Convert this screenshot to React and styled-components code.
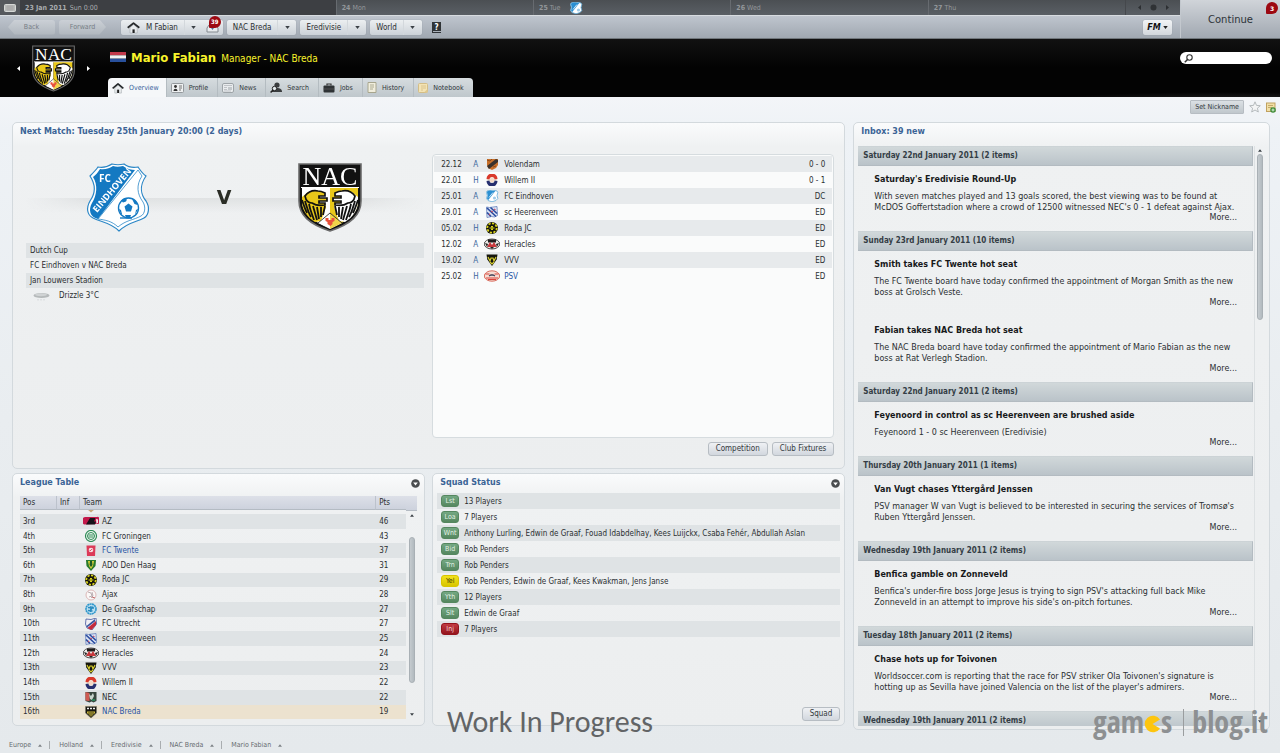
import { useLayoutEffect, useRef } from 'react';
import styled, { createGlobalStyle, css } from 'styled-components';

const narrow = `'DejaVu Sans Condensed', 'DejaVu Sans', Verdana, sans-serif`;
const wide = `'DejaVu Sans', Verdana, sans-serif`;

const GlobalStyle = createGlobalStyle`
* { box-sizing: border-box; }
body {
  margin: 0;
  background: #e6eaed;
  color: #2b2f31;
  font-family: ${narrow};
  font-size: 8px;
}
button, input { font-family: inherit; font-size: inherit; color: inherit; }
button { border: none; padding: 0; background: none; cursor: pointer; white-space: nowrap; }
a { color: inherit; text-decoration: none; }
h1, h2, h3, p, ul { margin: 0; padding: 0; }
ul { list-style: none; }
svg { display: block; flex: none; }
table { border-collapse: collapse; width: 100%; }
td, th { padding: 0; text-align: left; font-weight: 400; }
`;

const Page = styled.div`
position: relative;
display: flex;
flex-direction: column;
height: 100vh;
min-height: 640px;
overflow: hidden;
background: linear-gradient(#f3f5f8 97px, #eef2f6 130px, #e9edf0 420px, #e5e9ec);
`;

/* ---------- top of the window ---------- */

const Top = styled.header`
display: flex;
flex: none;
height: 39px;
border-bottom: 1px solid #70767b;
`;
const TopLeft = styled.div`
flex: 1;
display: flex;
flex-direction: column;
`;
const Timeline = styled.div`
display: grid;
grid-template-columns: 20px 8fr 5fr 5fr 5fr 5fr 55px;
height: 16px;
background: linear-gradient(#4b4f53, #5a5f65);
border-bottom: 1px solid #d8dce0;
color: #93979b;
font-size: 7px;
`;
const Day = styled.div`
display: flex;
align-items: center;
gap: 3px;
padding-left: 5px;
border-left: 1px solid #676b70;
white-space: nowrap;
${(p) => p.$today && css`
  background: #3d3f43;
  color: #a9acaf;
  border-left: none;
`}
svg { margin-left: 5px; }
`;
const DayEnd = styled.div`
display: flex;
align-items: center;
justify-content: center;
gap: 9px;
border-left: 1px solid #45484c;
`;
const CalendarCell = styled.div`
display: flex;
align-items: center;
justify-content: center;
background: #56595d;
`;
const Toolbar = styled.nav`
flex: 1;
display: flex;
align-items: center;
gap: 4px;
padding: 0 8px;
background: linear-gradient(#bfc5ce, #a0a8b1);
`;
const NavArrow = styled.button`
width: 47px;
height: 15px;
color: #767d85;
font-size: 7px;
background: linear-gradient(#cbd0d6, #b0b7be);
border-radius: 3px;
clip-path: ${(p) => p.$forward
    ? 'polygon(0 0, 86% 0, 100% 50%, 86% 100%, 0 100%)'
    : 'polygon(14% 0, 100% 0, 100% 100%, 14% 100%, 0 50%)'};
`;
const Menu = styled.div`
display: flex;
height: 15px;
border-radius: 2px;
background: linear-gradient(#eceff1, #ccd2d8);
box-shadow: 0 0 1px #7f868e;
margin-left: ${(p) => (p.$first ? '11px' : '0')};
`;
const MenuName = styled.button`
display: flex;
align-items: center;
gap: 6px;
padding: 0 6px;
`;
const MenuMore = styled.button`
display: flex;
align-items: center;
justify-content: center;
width: 19px;
border-left: 1px solid #d3d8dc;
`;
const InboxButton = styled.button`
position: relative;
width: 20px;
padding-left: 3px;
`;
const Badge = styled.span`
position: absolute;
top: ${(p) => p.$top || '-3px'};
right: 2px;
display: flex;
align-items: center;
justify-content: center;
width: 12px;
height: 12px;
border-radius: 6px 6px 6px 1px;
background: #9c0811;
color: #fff;
font-size: 6px;
font-weight: 700;
`;
const Spacer = styled.div`
flex: 1;
`;
const HelpButton = styled.button`
margin-left: 5px;
`;
const FmButton = styled.button`
display: flex;
align-items: center;
justify-content: center;
gap: 2px;
width: 29px;
height: 15px;
border-radius: 2px;
background: linear-gradient(#f2f4f6, #d3d8dd);
box-shadow: 0 0 1px #7f868e;
color: #111;
font: italic 700 8px ${wide};
`;
const Continue = styled.button`
position: relative;
width: 100px;
border-left: 1px solid #c3c8ce;
background: linear-gradient(#d0d4d9, #a1a8b1);
color: #2d3338;
font-family: ${wide};
font-size: 10px;
`;

/* ---------- banner ---------- */

const Banner = styled.div`
flex: none;
display: flex;
height: 58px;
padding: 0 8px 0 17px;
background:
  radial-gradient(ellipse at 96% 110%, #2b2b2b 0, transparent 12%),
  linear-gradient(#111, #030303 50%);
color: #fff;
`;
const ClubSwitch = styled.div`
display: flex;
align-items: center;
gap: 12px;
margin-right: 18px;
`;
const BannerMain = styled.div`
flex: 1;
display: flex;
flex-direction: column;
justify-content: space-between;
`;
const Title = styled.h1`
display: flex;
align-items: baseline;
gap: 5px;
padding: 11px 0 0 2px;
color: #f8f32b;
font-size: 13px;
line-height: 16px;
small {
  font-size: 10px;
  font-weight: 400;
}
`;
const Tabs = styled.div`
display: flex;
align-self: flex-start;
height: 19px;
border-radius: 4px 4px 0 0;
overflow: hidden;
`;
const Tab = styled.button`
display: flex;
align-items: center;
gap: 5px;
padding: 0 9px 0 4px;
font-size: 7px;
color: #30363a;
background: linear-gradient(#d6dcdf, #bfc7cc);
border-right: 1px solid #b4bcc1;
${(p) => p.$active && css`
  padding-right: 7px;
  background: #f5f7f9;
  color: #35629b;
`}
&:last-child { border-right: none; }
`;
const Search = styled.label`
display: flex;
align-items: center;
gap: 3px;
width: 92px;
height: 12px;
margin-top: 13px;
padding: 0 4px;
border-radius: 6px;
background: #fff;
input {
  min-width: 0;
  flex: 1;
  border: none;
  outline: none;
  padding: 0;
  background: none;
  color: #222;
}
`;

const SubBar = styled.div`
flex: none;
display: flex;
align-items: center;
justify-content: flex-end;
gap: 5px;
height: 25px;
padding: 0 4px 5px 0;
`;
const Button = styled.button`
height: 14px;
padding: 0 7px;
border: 1px solid #b7bdc3;
border-radius: 3px;
background: linear-gradient(#eff1f4, #d2d7de);
color: #343a40;
font-size: ${(p) => (p.$small ? '7px' : '8px')};
line-height: 12px;
${(p) => p.$small && css`
  padding: 0 4px;
  border-radius: 1px;
  background: linear-gradient(#dbe0e4, #c0c7cc);
`}
`;

/* ---------- panels ---------- */

const Content = styled.main`
flex: 1;
min-height: 0;
display: grid;
grid-template-columns: minmax(0, 2fr) minmax(0, 1fr);
gap: 8px;
padding: 0 10px 0 12px;
`;
const LeftSide = styled.div`
display: grid;
grid-template-columns: minmax(0, 1fr) minmax(0, 1fr);
grid-template-rows: minmax(0, 11fr) minmax(0, 8fr);
gap: 4px 7px;
padding-bottom: 4px;
min-height: 0;
`;
const Panel = styled.section`
display: flex;
flex-direction: column;
min-height: 0;
border: 1px solid #d3d9dd;
border-radius: 5px;
background: linear-gradient(#fafbfc, #eff1f2 24px, #eceeef);
grid-column: ${(p) => (p.$full ? '1 / -1' : 'auto')};
`;
const PanelHead = styled.div`
flex: none;
display: flex;
align-items: center;
justify-content: space-between;
height: 18px;
padding: 0 4px 0 7px;
h2 {
  color: #3b6496;
  font: 700 8px/18px ${wide};
}
`;
const PanelFoot = styled.div`
flex: none;
display: flex;
justify-content: flex-end;
gap: 4px;
padding-top: 4px;
`;

/* ---------- next match ---------- */

const MatchBody = styled.div`
flex: 1;
min-height: 0;
display: grid;
grid-template-columns: minmax(0, 1fr) minmax(0, 1fr);
gap: 4px;
padding: 13px 10px 12px 13px;
`;
const MatchSide = styled.div`
padding-right: 4px;
`;
const Versus = styled.div`
display: flex;
align-items: center;
justify-content: space-between;
height: 86px;
padding: 0 62px 0 60px;
background: linear-gradient(#dfe1e2, transparent) center 62% / 100% 15px no-repeat;
mask-image: linear-gradient(90deg, transparent, #000 15%, #000 85%, transparent);
strong {
  color: #2b2d26;
  font: 700 19px ${wide};
}
`;
const MatchFacts = styled.ul`
margin-top: 3px;
li {
  display: flex;
  align-items: center;
  gap: 9px;
  height: 15px;
  padding-left: 4px;
}
li:nth-child(odd) { background: #dfe3e5; }
li:last-child { padding-left: 7px; }
`;
const FixtureSide = styled.div`
display: flex;
flex-direction: column;
`;
const FixtureBox = styled.div`
flex: 1;
padding: 1px;
border: 1px solid #d6dcdf;
border-radius: 4px;
background: #fafbfb;
`;
const Fixtures = styled.table`
tr { height: 16px; }
tr:nth-child(odd) { background: #e7eaec; }
td:nth-child(1) { width: 37px; padding-left: 7px; }
td:nth-child(2) { width: 13px; padding-left: 2px; color: #3c689c; }
td:nth-child(3) { width: 20px; }
td:last-child { text-align: right; padding-right: 7px; }
`;
const TeamName = styled.a.attrs({ href: '#team' })`
color: ${(p) => (p.$mark ? '#2753a4' : 'inherit')};
`;

/* ---------- league table ---------- */

const LeagueBody = styled.div`
flex: 1;
min-height: 0;
display: flex;
margin: 4px 7px 6px;
`;
const LeagueScroll = styled.div`
flex: 1;
overflow-y: auto;
scrollbar-width: none;
`;
const League = styled.table`
border-collapse: separate;
border-spacing: 0;
height: 234px;
thead th {
  position: sticky;
  top: 0;
  height: 14px;
  padding-left: 3px;
  background: linear-gradient(#dde0e8, #cdd2dd);
  border-bottom: 1px solid #b4bbc3;
  border-right: 1px solid #bcc2cc;
}
thead th:last-child { border-right: none; }
th:nth-child(1) { width: 37px; }
th:nth-child(2) { width: 23px; }
th:nth-child(4) { width: 30px; }
td { padding-left: 3px; }
tbody tr:nth-child(even) { background: #dfe3e5; }
tbody tr:last-child { background: #ece2cf; }
`;
const TeamCell = styled.div`
display: flex;
align-items: center;
gap: 3px;
height: 12px;
`;
const Track = styled.div`
flex: none;
display: flex;
flex-direction: column;
align-items: center;
width: 11px;
padding-bottom: 3px;
&::before {
  content: '';
  width: 100%;
  height: 14px;
  margin-bottom: 3px;
  border-bottom: 1px solid #b4bbc3;
  background: linear-gradient(#dde0e8, #cdd2dd);
}
${(p) => p.$plain && css`
  padding-top: 3px;
  border-left: 1px solid #dde1e3;
  &::before { display: none; }
`}
`;
const Rail = styled.div`
flex: 1;
display: flex;
flex-direction: column;
width: 6px;
padding-top: ${(p) => (p.$offset ? '20px' : '2px')};
&::before {
  content: '';
  height: ${(p) => p.$thumb};
  border: 1px solid #a9b0b5;
  border-radius: 3px;
  background: linear-gradient(90deg, #c5cbcf, #b2babf);
}
`;

/* ---------- squad status ---------- */

const SquadList = styled.ul`
flex: 1;
margin: 1px 4px 0;
li {
  display: flex;
  align-items: center;
  gap: 5px;
  height: 16px;
  padding-left: 4px;
  white-space: nowrap;
}
li:nth-child(odd) { background: #dfe3e5; }
`;
const tagColors = {
  green: ['#74a883', '#55875f', '#e2f1e5'],
  yellow: ['#f2e21d', '#d8c500', '#3d3900'],
  red: ['#c23a41', '#93141d', '#f7d9da'],
};
const Tag = styled.span`
width: 18px;
height: 12px;
border-radius: 3px;
border: 1px solid ${(p) => tagColors[p.$tone][1]};
background: linear-gradient(${(p) => tagColors[p.$tone][0]}, ${(p) => tagColors[p.$tone][1]});
color: ${(p) => tagColors[p.$tone][2]};
font-size: 7px;
line-height: 10px;
text-align: center;
`;
const SquadFoot = styled(PanelFoot)`
padding: 0 4px 4px;
`;

/* ---------- inbox ---------- */

const InboxBody = styled.div`
flex: 1;
min-height: 0;
display: flex;
gap: 1px;
padding: 5px 4px 3px;
`;
const InboxScroll = styled.div`
flex: 1;
overflow-y: auto;
scrollbar-width: none;
`;
const DateStrip = styled.h2`
height: 20px;
padding-left: 5px;
border: 1px solid #b3bbc1;
border-top-color: #ccd3d6;
border-left: none;
background: linear-gradient(#d1d8da, #bac3c9);
color: #343d45;
font: 700 8px/18px ${narrow};
`;
const News = styled.article`
padding: 8px 12px 8px 16px;
font: 8px/11px ${wide};
& + & { margin-top: 1px; }
h3 {
  margin-bottom: 6px;
  color: #17191a;
  font-size: 8px;
  line-height: 11px;
}
`;
const More = styled.a.attrs({ href: '#more' })`
display: block;
padding-right: 4px;
line-height: 10px;
text-align: right;
`;

/* ---------- footer and overlays ---------- */

const Crumbs = styled.footer`
flex: none;
display: flex;
align-items: center;
height: 23px;
padding: 7px 0 0 9px;
color: #676c70;
font-size: 7px;
button {
  display: flex;
  align-items: center;
  gap: 7px;
}
button + button {
  margin-left: 7px;
  padding-left: 9px;
  border-left: 1px solid #a9adb0;
}
`;
const Progress = styled.div`
position: absolute;
left: 447px;
bottom: 14px;
color: #626466;
font: 30px/34px Carlito, Lato, sans-serif;
pointer-events: none;
`;
const BlogMark = styled.div`
position: absolute;
right: 12px;
bottom: 13px;
display: flex;
align-items: center;
color: #8d9092;
font: 700 30px/36px 'Liberation Sans Narrow', 'Open Sans Condensed', 'DejaVu Sans Condensed', sans-serif;
pointer-events: none;
svg { margin-top: 4px; }
i {
  width: 1px;
  height: 27px;
  margin: 0 8px 0 11px;
  background: #9a9d9f;
}
`;

/* ---------- drawings ---------- */

const Caret = ({ up, color = '#3b4146', size = 5 }) => (
  <svg width={size} height="3" viewBox="0 0 6 4">
    <path d={up ? 'M0 4 3 0 6 4z' : 'M0 0 3 4 6 0z'} fill={color} />
  </svg>
);

const SideArrow = ({ left, color = '#fff' }) => (
  <svg width="3" height="5" viewBox="0 0 3 5">
    <path d={left ? 'M3 0 0 2.5 3 5z' : 'M0 0 3 2.5 0 5z'} fill={color} />
  </svg>
);

const Dropdown = () => (
  <svg width="9" height="9" viewBox="0 0 9 9">
    <circle cx="4.5" cy="4.5" r="4.3" fill="#4a4d4f" />
    <path d="M2.2 3.4h4.6L4.5 6.6z" fill="#fff" />
  </svg>
);

const House = ({ size = 13 }) => (
  <svg width={size} height={size} viewBox="0 0 13 12">
    <path d="M3 6v5.5h2.6V8h2v3.5h2.6V6L6.6 3z" fill="#e9ecee" stroke="#a3a9ad" strokeWidth=".6" />
    <path d="M5.6 8h2v3.5h-2z" fill="#222" />
    <path d="M.7 6.3 6.5 1.6l5.8 4.7" fill="none" stroke="#26292b" strokeWidth="1.8" strokeLinejoin="round" />
  </svg>
);

const NacCrest = ({ width = 64, height = 69 }) => (
  <svg width={width} height={height} viewBox="0 0 64 69">
    <path d="M1 1h62v37c0 14-10 23-31 30C11 61 1 52 1 38z" fill="#111" stroke="#6c6c6c" strokeWidth="1.6" />
    <path d="M4 25h28v40C13 58 4 50 4 38z" fill="#fff" />
    <path d="M32 25h28v13c0 12-9 20-28 27z" fill="#e9c81a" />
    {/* left eagle, yellow on white */}
    <path d="M4 34l6-5 9 5-4 6 12 1 1 3-5 14-6 1C9 54 4 47 4 38z" fill="#e9c81a" />
    <path d="M7 33c3-4 8-6 13-5 3 0 5 1 7 2v3h-6v2h8v3h-8v2h6v2c-6 1-10 0-13-2-3 0-6-2-7-7z" fill="#e9c81a" stroke="#111" strokeWidth="1.700" />
    {/* right eagle, white on yellow */}
    <path d="M60 34l-6-5-9 5 4 6-12 1-1 3 5 14 6 1c8-5 13-12 13-21z" fill="#fff" />
    <path d="M57 33c-3-4-8-6-13-5-3 0-5 1-7 2v3h6v2h-8v3h8v2h-6v2c6 1 10 0 13-2 3 0 6-2 7-7z" fill="#fff" stroke="#111" strokeWidth="1.700" />
    <g fill="none" stroke="#111" strokeWidth="1.800">
      <path d="M4 37c2 6 3 9 5 13M7 38c2 6 3 11 6 16M11 41c1 6 3 10 5 16M15 43l4 14M19 44l2 12M23 44v10M27 43l-2 9" />
      <path d="M60 37c-2 6-3 9-5 13M57 38c-2 6-3 11-6 16M53 41c-1 6-3 10-5 16M49 43l-4 14M45 44l-2 12M41 44v10M37 43l2 9" />
    </g>
    <path d="M32 50 44 60 32 66 20 60z" fill="#fff" />
    <path d="M32 50 44 60 32 66z" fill="#f0d44a" />
    <path d="M32 50 44 60M32 50 20 60" stroke="#111" strokeWidth=".8" />
    <path d="M27.500 55h3v2h3v-2h3v3l-2 1v2l-2 2-3-2v-2l-2-1z" fill="#e8513c" />
    <path d="M3 24.500h58" stroke="#fff" strokeWidth="1.200" />
    <text x="32" y="21.500" textAnchor="middle" fill="#fff" fontFamily="'Liberation Serif', serif" fontSize="26">NAC</text>
  </svg>
);

const EindhovenCrest = () => (
  <svg width="64" height="70" viewBox="0 0 64 70">
    <path d="M12 5c6 1 11-1 14-3 4 1 8 1 12 0 4 3 9 4 14 3 2 3 5 7 8 9-7 10-5 19 0 25 4 6 3 14-2 17-7 4-16 4-25 13C24 60 14 60 7 56 1 53 0 46 4 39c5-7 6-16 0-25 3-3 6-6 8-9z" fill="#fff" stroke="#2a86c6" strokeWidth="1.200" />
    <path d="M14 7c5 1 10-1 13-3 3 1 6 1 10 0 4 3 9 4 12 4L12 57C4 55 2 48 6 41c5-8 6-18 1-26 3-2 5-5 7-8z" fill="#1479c2" />
    <path d="M52 8 12 57c7 1 14 2 20 8 8-7 16-7 23-11 4-2 5-9 2-14-6-8-7-17-1-26z" fill="#fff" stroke="#2a86c6" strokeWidth=".8" />
    <text x="19" y="20" textAnchor="middle" fill="#fff" fontFamily="'Open Sans', sans-serif" fontWeight="700" fontSize="10">FC</text>
    <text transform="translate(11 51) rotate(-50)" fill="#fff" fontFamily="'Open Sans', sans-serif" fontWeight="700" fontSize="9">EINDHOVEN</text>
    <circle cx="42.500" cy="46" r="10" fill="#fff" stroke="#1479c2" strokeWidth="1.400" />
    <path d="M42.500 41.500l4 3-1.500 5h-5l-1.500-5zM35 38.500l3-2 3 1-1 2-3 1zM46 37l4 2 1.500 4-3-1zM33 47l2 1 1 4-1 .5zM52 47l-2 1-1 5zM39 53l6 0-1 3h-4z" fill="#1479c2" />
    <path d="M34 56h12" stroke="#1479c2" strokeWidth="1.400" />
  </svg>
);

/* small club badges, all on a 16x12 canvas */
const badgeArt = {
  volendam: <><path d="M3 1h11v6l-2 3-4 2-4-2-1-3z" fill="#c8702a" /><path d="M3 8 12 1l2 1v2L5 11z" fill="#3a322d" /><path d="M3 2l3 1 2-2M9 9l3-1" stroke="#8a4b1c" fill="none" /></>,
  willem: <><circle cx="8" cy="6" r="5.500" fill="#f4efe2" /><path d="M2.500 5a5.500 5.500 0 0 1 11 0l-3 .5a2.500 2.500 0 0 0-5 0z" fill="#d9392b" /><path d="M2.500 7a5.500 5.500 0 0 0 11 0l-3-.5a2.500 2.500 0 0 1-5 0z" fill="#27306f" /><circle cx="8" cy="6" r="2.200" fill="#f5d9c6" /></>,
  eindhoven: <><path d="M3 1l3-.7 2 .4 2-.4 3 .7.800 1.500-.8 3 .8 3L12 10.500l-4 1.300-4-1.300L2.500 8.500l.8-3-.8-3z" fill="#fff" stroke="#62acd9" strokeWidth=".8" /><path d="M3.300 1.300l3-.7 2 .4 3.200-.3L4.300 10 3 8.500l.8-3-.8-3z" fill="#2b8fd2" /><path d="M5 7.500l4-5" stroke="#cfe8f8" /><circle cx="10.500" cy="8" r="1.600" fill="#9fcbe8" /></>,
  heerenveen: <><path d="M2.500 1l3 .5L13 .5l.5 9-3 1.500-3-.5-4.500 1z" fill="#dfe6f5" stroke="#6580bd" strokeWidth=".8" /><path d="M3 2l9 8.500M6.500 1.500l6.500 6M3 6.500l4 4" stroke="#2a4da0" strokeWidth="1.700" /><path d="M7 5l2 1M10 3l1.500 1M5 8l1 1" stroke="#c0506a" strokeWidth="1.200" /></>,
  roda: <><circle cx="8" cy="6" r="6" fill="#15150b" /><circle cx="8" cy="6" r="4.700" fill="none" stroke="#d9d31c" strokeWidth="1.800" strokeDasharray="2.200 1.400" /><path d="M5.500 6h5M7 4.600h2M7 7.400h2" stroke="#d9d31c" strokeWidth="1.200" /></>,
  heracles: <><ellipse cx="8" cy="6" rx="7.800" ry="5" fill="#eceae7" stroke="#4d4b4b" /><path d="M4 1.500h8v3H4z" fill="#1f1d1d" /><path d="M3 9l3-5 2 3 2-3 3 5z" fill="#c7373b" /><path d="M1 5l3 1-1 3zM15 5l-3 1 1 3zM6 9h4l-2 2z" fill="#222" /></>,
  vvv: <><path d="M2.500.5h11l-.8 5L8 12 3.300 5.500z" fill="#16160e" /><path d="M4 3l2 4 1-3h2l1 3 2-4M6 8l2 2 2-2" fill="none" stroke="#d7cf2e" strokeWidth="1.200" /></>,
  psv: <><ellipse cx="8" cy="6" rx="7.700" ry="5.200" fill="#f6dcd2" stroke="#d86d5f" /><path d="M1.500 4h4M10.500 4h4M2 8h12M4 9.500h8" stroke="#d9443c" strokeWidth="1.100" /><path d="M5 6l2-1h2l2 1" stroke="#3c3f55" strokeWidth="1.300" fill="none" /></>,
  az: <><path d="M2.500 2H14a2 3 0 0 1 1 7h-2L1 9.500A4 4 0 0 1 2.500 2z" fill="#c3194b" /><path d="M3 9.500 7 3h5.500L11 6.500h2l-1 3z" fill="#17131a" /><path d="M13 4l2 .5v3L13.500 9z" fill="#f4e7ea" /></>,
  groningen: <><circle cx="8" cy="6" r="5.500" fill="#f2f8f3" stroke="#2c8a55" strokeWidth="1.200" /><circle cx="8" cy="6" r="3.500" fill="none" stroke="#2c8a55" /><path d="M5.500 5h5M5.500 7h5" stroke="#2c8a55" /></>,
  twente: <><path d="M3.500.5h9L12 11H4z" fill="#dc3a58" /><circle cx="8" cy="5" r="2.300" fill="#f7dfe2" /><path d="M6 5.500l2 .5V4h2z" fill="#dc3a58" /></>,
  ado: <><path d="M3 1h10l-.5 6L8 12 3.500 7z" fill="#287a2d" /><path d="M5 2h6l-1 5-2 3-2-3z" fill="#d9d13c" /><path d="M7 2h2l.5 4L8 8 6.500 6z" fill="#1d5a28" /></>,
  ajax: <><circle cx="8" cy="6" r="5" fill="#fbf8f7" stroke="#dcb9b9" /><path d="M5 3l3 1 1 3-3 1M9 3l1 4-2 2" fill="none" stroke="#a99a9f" strokeWidth=".8" /><path d="M9 8l3 1" stroke="#c56b6b" /></>,
  graafschap: <><circle cx="8" cy="6" r="5" fill="#b9dff0" stroke="#2f97cc" strokeWidth="1.600" strokeDasharray="2 .4" /><path d="M5 4.500l6 .5M5 7.500l4.500.5M8 3l-.5 6M10 3.500l-3 5" stroke="#2789be" strokeWidth="1.300" /></>,
  utrecht: <><path d="M3 1l5 .5L13 0l.5 6L9 12 4 10 2.500 6z" fill="#f0eff4" stroke="#42549d" strokeWidth=".8" /><path d="M13 3v4l-4.500 5-4-2z" fill="#c52b3c" /><path d="M3.500 8 12 1v2.500l-8 6z" fill="#38559f" /></>,
  nec: <><path d="M2.500 1h11v9l-3 1.500-2-1-2 1-4-1.500z" fill="#39473f" /><path d="M2.500 1l4 1v8l-4-.5z" fill="#cf5a52" /><path d="M6 3l2 2 2-3 1 3-2 4-2-1z" fill="#c9d6ce" /><path d="M9 8h3v2H9z" fill="#2c8158" /></>,
  nac: <><path d="M2.500.5h11V7L8 12 2.500 7z" fill="#17160f" stroke="#77756a" strokeWidth=".6" /><path d="M4 5.500h8V7L8 10.800 4 7z" fill="#cfb93a" /><path d="M4 2.500h8" stroke="#eee" strokeDasharray="2 1" strokeWidth="1.500" /><path d="M6 6v3M8 6v4M10 6v3" stroke="#17160f" strokeWidth=".8" /></>,
  second: <path d="M4 2h8v6l-4 3.500L4 8z" fill="#c7a878" />,
};
const ClubBadge = ({ club }) => (
  <svg width="16" height="12" viewBox="0 0 16 12">{badgeArt[club]}</svg>
);

const tabIcons = {
  Overview: <House size={12} />,
  Profile: (
    <svg width="13" height="10" viewBox="0 0 13 10">
      <rect x=".5" y=".5" width="12" height="9" rx="1" fill="#eef0f1" stroke="#94999d" />
      <circle cx="4.500" cy="3.500" r="1.400" fill="#333" /><path d="M2.500 8c0-3 4-3 4 0z" fill="#333" />
      <path d="M8 3h3M8 5h3M8 7h2" stroke="#555" strokeWidth=".8" />
    </svg>
  ),
  News: (
    <svg width="12" height="10" viewBox="0 0 12 10">
      <rect x=".5" y=".5" width="11" height="9" rx="1.500" fill="#e9ecee" stroke="#9ea4a8" />
      <path d="M2 2.500h8M2 4.500h3M2 6.500h3M2 8h7" stroke="#b4b9bd" strokeWidth=".8" /><rect x="6" y="4" width="4" height="3" fill="#c3c8cb" />
    </svg>
  ),
  Search: (
    <svg width="12" height="11" viewBox="0 0 12 11">
      <circle cx="7" cy="3" r="2.600" fill="#3a3d3f" /><path d="M2 10c0-4 2-4 5-4s5 1 5 4z" fill="#3a3d3f" />
      <circle cx="4.500" cy="6.500" r="2.200" fill="#e4eaed" stroke="#222" /><path d="M3 8 .6 10.500" stroke="#222" strokeWidth="1.400" />
    </svg>
  ),
  Jobs: (
    <svg width="12" height="10" viewBox="0 0 12 10">
      <path d="M4 2.500V1h4v1.500" fill="none" stroke="#333" strokeWidth="1.200" /><rect x=".5" y="2.500" width="11" height="7" rx="1" fill="#2f3335" />
      <path d="M.5 6h11" stroke="#666" strokeWidth=".6" />
    </svg>
  ),
  History: (
    <svg width="10" height="11" viewBox="0 0 10 11">
      <path d="M1 .5h8v10H1z" fill="#f1eedd" stroke="#a8a68e" /><path d="M3 3h4M3 5h4M3 7h3" stroke="#9d9a80" strokeWidth=".8" />
    </svg>
  ),
  Notebook: (
    <svg width="10" height="10" viewBox="0 0 10 10">
      <rect x=".5" y=".5" width="9" height="9" rx="1" fill="#f3e3b4" stroke="#d3bd86" /><path d="M3 3h5M3 5h5M3 7h2" stroke="#d3bd86" strokeWidth=".8" />
      <path d="M6 9.500 9.500 6v3.500z" fill="#dfc88e" />
    </svg>
  ),
};

/* ---------- data ---------- */

const days = [['24', 'Mon'], ['25', 'Tue'], ['26', 'Wed'], ['27', 'Thu']];

const fixtures = [
  ['22.12', 'A', 'volendam', 'Volendam', '0 - 0'],
  ['22.01', 'H', 'willem', 'Willem II', '0 - 1'],
  ['25.01', 'A', 'eindhoven', 'FC Eindhoven', 'DC'],
  ['29.01', 'A', 'heerenveen', 'sc Heerenveen', 'ED'],
  ['05.02', 'H', 'roda', 'Roda JC', 'ED'],
  ['12.02', 'A', 'heracles', 'Heracles', 'ED'],
  ['19.02', 'A', 'vvv', 'VVV', 'ED'],
  ['25.02', 'H', 'psv', 'PSV', 'ED'],
];

const league = [
  ['', 'second', '', ''],
  ['3rd', 'az', 'AZ', 46],
  ['4th', 'groningen', 'FC Groningen', 43],
  ['5th', 'twente', 'FC Twente', 37],
  ['6th', 'ado', 'ADO Den Haag', 31],
  ['7th', 'roda', 'Roda JC', 29],
  ['8th', 'ajax', 'Ajax', 28],
  ['9th', 'graafschap', 'De Graafschap', 27],
  ['10th', 'utrecht', 'FC Utrecht', 27],
  ['11th', 'heerenveen', 'sc Heerenveen', 25],
  ['12th', 'heracles', 'Heracles', 24],
  ['13th', 'vvv', 'VVV', 23],
  ['14th', 'willem', 'Willem II', 22],
  ['15th', 'nec', 'NEC', 22],
  ['16th', 'nac', 'NAC Breda', 19],
];
const marked = ['FC Twente', 'NAC Breda', 'PSV'];

const squad = [
  ['Lst', 'green', '13 Players'],
  ['Loa', 'green', '7 Players'],
  ['Wnt', 'green', 'Anthony Lurling, Edwin de Graaf, Fouad Idabdelhay, Kees Luijckx, Csaba Fehér, Abdullah Aslan'],
  ['Bid', 'green', 'Rob Penders'],
  ['Trn', 'green', 'Rob Penders'],
  ['Yel', 'yellow', 'Rob Penders, Edwin de Graaf, Kees Kwakman, Jens Janse'],
  ['Yth', 'green', '12 Players'],
  ['Slt', 'green', 'Edwin de Graaf'],
  ['Inj', 'red', '7 Players'],
];

const inbox = [
  ['Saturday 22nd January 2011 (2 items)', [
    ["Saturday's Eredivisie Round-Up", "With seven matches played and 13 goals scored, the best viewing was to be found at McDOS Goffertstadion where a crowd of 12500 witnessed NEC's 0 - 1 defeat against Ajax."],
  ]],
  ['Sunday 23rd January 2011 (10 items)', [
    ['Smith takes FC Twente hot seat', 'The FC Twente board have today confirmed the appointment of Morgan Smith as the new boss at Grolsch Veste.'],
    ['Fabian takes NAC Breda hot seat', 'The NAC Breda board have today confirmed the appointment of Mario Fabian as the new boss at Rat Verlegh Stadion.'],
  ]],
  ['Saturday 22nd January 2011 (2 items)', [
    ['Feyenoord in control as sc Heerenveen are brushed aside', 'Feyenoord 1 - 0 sc Heerenveen (Eredivisie)'],
  ]],
  ['Thursday 20th January 2011 (1 items)', [
    ['Van Vugt chases Yttergård Jenssen', 'PSV manager W van Vugt is believed to be interested in securing the services of Tromsø\'s Ruben Yttergård Jenssen.'],
  ]],
  ['Wednesday 19th January 2011 (2 items)', [
    ['Benfica gamble on Zonneveld', "Benfica's under-fire boss Jorge Jesus is trying to sign PSV's attacking full back Mike Zonneveld in an attempt to improve his side's on-pitch fortunes."],
  ]],
  ['Tuesday 18th January 2011 (2 items)', [
    ['Chase hots up for Toivonen', "Worldsoccer.com is reporting that the race for PSV striker Ola Toivonen's signature is hotting up as Sevilla have joined Valencia on the list of the player's admirers."],
  ]],
  ['Wednesday 19th January 2011 (2 items)', []],
];

/* ---------- parts ---------- */

const Header = () => (
  <Top>
    <TopLeft>
      <Timeline>
        <CalendarCell>
          <svg width="12" height="8" viewBox="0 0 12 8">
            <rect x=".5" y=".5" width="11" height="7" rx="1" fill="#b9bbb9" stroke="#d6d8d6" />
            <path d="M2 3h8M2 5h8M4 1v6M6 1v6M8 1v6" stroke="#9c9e9c" strokeWidth=".5" />
          </svg>
        </CalendarCell>
        <Day $today><b>23 Jan 2011</b> Sun 0:00</Day>
        {days.map(([num, name]) => (
          <Day key={num}>
            <span><b>{num}</b> {name}</span>
            {num === '25' && <ClubBadge club="eindhoven" />}
          </Day>
        ))}
        <DayEnd>
          <SideArrow left color="#2c2f32" />
          <svg width="7" height="7" viewBox="0 0 7 7"><circle cx="3.500" cy="3.500" r="3" fill="#2f3235" /></svg>
          <SideArrow color="#2c2f32" />
        </DayEnd>
      </Timeline>
      <Toolbar>
        <NavArrow>Back</NavArrow>
        <NavArrow $forward>Forward</NavArrow>
        <Menu $first>
          <MenuName><House /> M Fabian</MenuName>
          <MenuMore aria-label="Manager menu"><Caret /></MenuMore>
          <InboxButton aria-label="Inbox">
            <svg width="13" height="11" viewBox="0 0 13 11">
              <path d="M1 6l2-3h7l2 3v4H1z" fill="#e8ebee" stroke="#83898f" />
              <path d="M4 4.500h5L6.500 8z" fill="#4d7099" />
            </svg>
            <Badge $top="-4px">39</Badge>
          </InboxButton>
        </Menu>
        {['NAC Breda', 'Eredivisie', 'World'].map((name) => (
          <Menu key={name}>
            <MenuName>{name}</MenuName>
            <MenuMore aria-label={`${name} menu`}><Caret /></MenuMore>
          </Menu>
        ))}
        <HelpButton aria-label="Help">
          <svg width="10" height="11" viewBox="0 0 10 11">
            <path d="M1 0h9v9H2v1h8v1H1z" fill="#2f3336" />
            <text x="5.500" y="7.500" textAnchor="middle" fill="#fff" fontSize="8" fontWeight="700">?</text>
          </svg>
        </HelpButton>
        <Spacer />
        <FmButton>FM <Caret color="#222" /></FmButton>
      </Toolbar>
    </TopLeft>
    <Continue>Continue<Badge $top="2px">3</Badge></Continue>
  </Top>
);

const ManagerBanner = () => (
  <Banner>
    <ClubSwitch>
      <button aria-label="Previous club"><SideArrow left /></button>
      <NacCrest width={43} height={47} />
      <button aria-label="Next club"><SideArrow /></button>
    </ClubSwitch>
    <BannerMain>
      <Title>
        <svg width="16" height="10" viewBox="0 0 16 10">
          <path d="M0 0h16v3.300H0z" fill="#c2394b" /><path d="M0 3.300h16v3.400H0z" fill="#f2f2f2" /><path d="M0 6.700h16V10H0z" fill="#28509c" />
        </svg>
        Mario Fabian <small>Manager - NAC Breda</small>
      </Title>
      <Tabs role="tablist">
        {Object.keys(tabIcons).map((name) => (
          <Tab key={name} role="tab" aria-selected={name === 'Overview'} $active={name === 'Overview'}>
            {tabIcons[name]}{name}
          </Tab>
        ))}
      </Tabs>
    </BannerMain>
    <Search aria-label="Search">
      <svg width="9" height="9" viewBox="0 0 9 9">
        <circle cx="5.500" cy="3.500" r="2.700" fill="none" stroke="#333" strokeWidth="1.100" /><path d="M3.500 5.500.8 8.300" stroke="#333" strokeWidth="1.500" />
      </svg>
      <input type="text" />
    </Search>
  </Banner>
);

const NextMatch = () => (
  <Panel $full>
    <PanelHead><h2>Next Match: Tuesday 25th January 20:00 (2 days)</h2></PanelHead>
    <MatchBody>
      <MatchSide>
        <Versus><EindhovenCrest /><strong>V</strong><NacCrest /></Versus>
        <MatchFacts>
          <li>Dutch Cup</li>
          <li>FC Eindhoven v NAC Breda</li>
          <li>Jan Louwers Stadion</li>
          <li>
            <svg width="17" height="10" viewBox="0 0 17 10">
              <ellipse cx="8.500" cy="4.500" rx="8" ry="2.600" fill="#b5b9ba" /><ellipse cx="8" cy="3.800" rx="6" ry="1.500" fill="#d0d3d4" />
              <path d="M5 8v1.500M8 8v1.500M11 8v1.500" stroke="#c9cdd0" strokeWidth=".8" />
            </svg>
            Drizzle 3°C
          </li>
        </MatchFacts>
      </MatchSide>
      <FixtureSide>
        <FixtureBox>
          <Fixtures>
            <tbody>
              {fixtures.map(([date, side, club, name, result]) => (
                <tr key={date}>
                  <td>{date}</td>
                  <td>{side}</td>
                  <td><ClubBadge club={club} /></td>
                  <td><TeamName $mark={marked.includes(name)}>{name}</TeamName></td>
                  <td>{result}</td>
                </tr>
              ))}
            </tbody>
          </Fixtures>
        </FixtureBox>
        <PanelFoot>
          <Button>Competition</Button>
          <Button>Club Fixtures</Button>
        </PanelFoot>
      </FixtureSide>
    </MatchBody>
  </Panel>
);

const LeagueTable = () => {
  const scroll = useRef(null);
  // start a little way down so that the club's own row is in view
  useLayoutEffect(() => {
    scroll.current.scrollTop = scroll.current.scrollHeight;
  }, []);
  return (
    <Panel>
      <PanelHead><h2>League Table</h2><button aria-label="League options"><Dropdown /></button></PanelHead>
      <LeagueBody>
        <LeagueScroll ref={scroll}>
          <League>
            <thead>
              <tr><th>Pos</th><th>Inf</th><th>Team</th><th>Pts</th></tr>
            </thead>
            <tbody>
              {league.map(([pos, club, name, pts]) => (
                <tr key={club}>
                  <td>{pos}</td>
                  <td />
                  <td><TeamCell><ClubBadge club={club} /><TeamName $mark={marked.includes(name)}>{name}</TeamName></TeamCell></td>
                  <td>{pts}</td>
                </tr>
              ))}
            </tbody>
          </League>
        </LeagueScroll>
        <Track>
          <Caret up size={4} />
          <Rail $offset $thumb="82%" />
          <Caret size={4} />
        </Track>
      </LeagueBody>
    </Panel>
  );
};

const SquadStatus = () => (
  <Panel>
    <PanelHead><h2>Squad Status</h2><button aria-label="Squad options"><Dropdown /></button></PanelHead>
    <SquadList>
      {squad.map(([tag, tone, text]) => (
        <li key={tag}><Tag $tone={tone}>{tag}</Tag>{text}</li>
      ))}
    </SquadList>
    <SquadFoot><Button>Squad</Button></SquadFoot>
  </Panel>
);

const Inbox = () => (
  <Panel>
    <PanelHead><h2>Inbox: 39 new</h2></PanelHead>
    <InboxBody>
      <InboxScroll>
        {inbox.map(([date, items], i) => (
          <section key={i}>
            <DateStrip>{date}</DateStrip>
            {items.map(([title, text]) => (
              <News key={title}>
                <h3>{title}</h3>
                <p>{text}</p>
                <More>More...</More>
              </News>
            ))}
          </section>
        ))}
      </InboxScroll>
      <Track $plain>
        <Caret up size={4} />
        <Rail $thumb="29%" />
        <Caret size={4} />
      </Track>
    </InboxBody>
  </Panel>
);

export default function App() {
  return (
    <Page>
      <GlobalStyle />
      <Header />
      <ManagerBanner />
      <SubBar>
        <Button $small>Set Nickname</Button>
        <button aria-label="Favourite">
          <svg width="12" height="12" viewBox="0 0 12 12">
            <path d="M6 .8l1.500 3.600 3.800.3-2.900 2.500.9 3.800L6 9l-3.300 2 .9-3.800L.7 4.700l3.800-.3z" fill="#f3f4f5" stroke="#b5babd" />
          </svg>
        </button>
        <button aria-label="Add note">
          <svg width="10" height="11" viewBox="0 0 10 11">
            <rect x=".5" y="1" width="8.500" height="8.500" fill="#f1dfa6" stroke="#c0a160" /><path d="M2 3.500h5M2 5.500h4" stroke="#b99c5c" strokeWidth=".8" />
            <circle cx="7" cy="8" r="2.800" fill="#3c8a36" /><path d="M7 6.500v3M5.500 8h3" stroke="#d8f0d4" />
          </svg>
        </button>
      </SubBar>
      <Content>
        <LeftSide>
          <NextMatch />
          <LeagueTable />
          <SquadStatus />
        </LeftSide>
        <Inbox />
      </Content>
      <Crumbs>
        {['Europe', 'Holland', 'Eredivisie', 'NAC Breda', 'Mario Fabian'].map((name) => (
          <button key={name}>{name} <Caret up size={4} color="#7d8286" /></button>
        ))}
      </Crumbs>
      <Progress>Work In Progress</Progress>
      <BlogMark>
        gam
        <svg width="17" height="18" viewBox="0 0 17 18">
          <path d="M16 4.500A8.300 8.300 0 1 0 16 13.500L8.500 9z" fill="#fdc50f" />
        </svg>
        s<i />blog.it
      </BlogMark>
    </Page>
  );
}
